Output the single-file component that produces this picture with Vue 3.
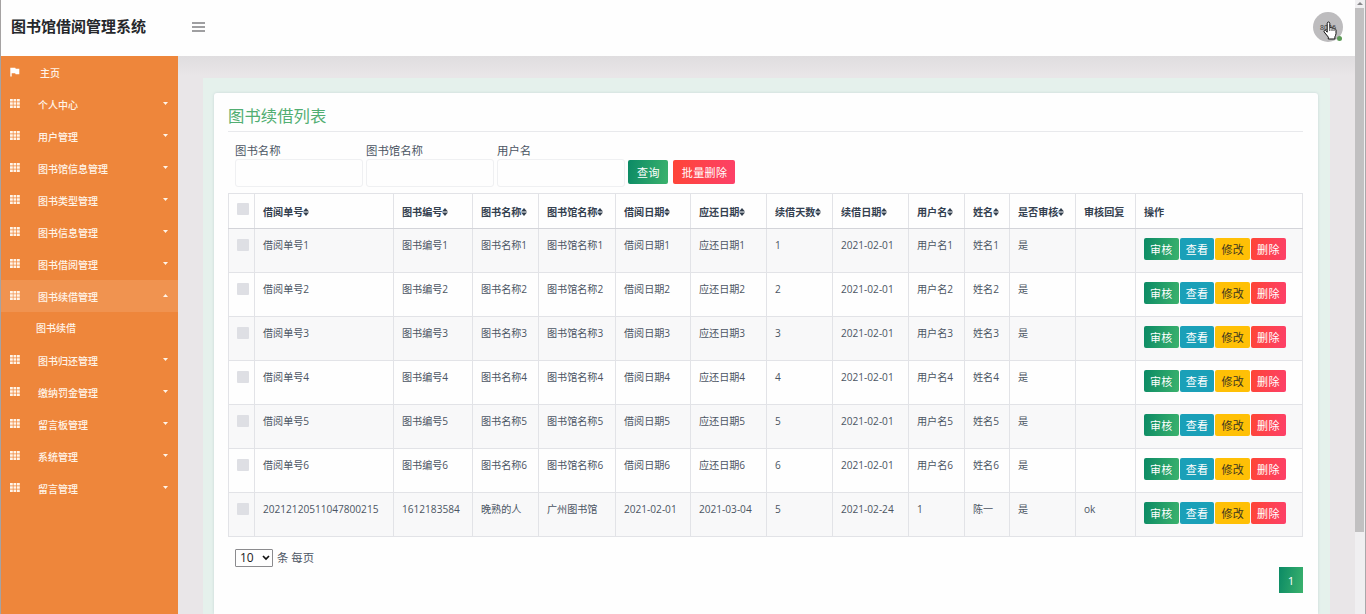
<template>
  <div class="page">
    <header class="navbar">
      <h1 class="brand">图书馆借阅管理系统</h1>
      <button class="menu-toggle" aria-label="menu">
        <svg width="14" height="10" viewBox="0 0 14 10">
          <path d="M0 1h13M0 5h13M0 9h13" stroke="#808083" stroke-width="1.3" />
        </svg>
      </button>
      <div class="avatar">
        <span class="avatar-text">8026</span>
        <span class="avatar-status"></span>
        <svg class="pointer" width="14" height="19" viewBox="0 0 14 19">
          <path
            d="M4.2 11.2V2.4c0-1.9 2.6-1.9 2.6 0v4.5c.5-.8 2-.6 2.2.4.7-.6 1.9-.2 2 .7.8-.5 2 0 2 1.1v3.6c0 1.3-.8 2.1-1.1 3.1V18H5.3v-1.9L1.2 11c-.9-1.4.8-2.5 1.9-1.2z"
            fill="#fff"
            stroke="#111"
            stroke-width="1"
            stroke-linejoin="round"
          />
          <path d="M6.8 7v3M9 7.5V10M11 8.2V10" stroke="#111" stroke-width=".8" />
        </svg>
      </div>
    </header>

    <div class="body">
      <nav class="sidebar">
        <div class="menu-item menu-home">
          <svg class="menu-icon" width="10" height="10" viewBox="0 0 10 10">
            <path d="M.3.8h5l.4 1H9.300v5.400H5.600l-.4-1H1.700V9.500H.3z" fill="#fff" />
          </svg>
          <span class="menu-label">主页</span>
        </div>
        <template v-for="item in menus" :key="item.name">
          <div class="menu-item" :class="{ open: item.children }">
            <svg class="menu-icon" width="10" height="9" viewBox="0 0 10 9">
              <path
                d="M0 0h2.800v2.500H0zM3.500 0h2.800v2.500H3.500zM7 0h2.800v2.500H7zM0 3.200h2.800v2.500H0zM3.500 3.200h2.800v2.500H3.500zM7 3.200h2.800v2.500H7zM0 6.400h2.800v2.500H0zM3.500 6.400h2.800v2.500H3.500zM7 6.400h2.800v2.500H7z"
                fill="#fff4e8"
              />
            </svg>
            <span class="menu-label">{{ item.name }}</span>
            <svg class="caret" width="5" height="3" viewBox="0 0 5 3">
              <path :d="item.children ? 'M0 3h5L2.500 0z' : 'M0 0h5L2.500 3z'" fill="#fff4e8" />
            </svg>
          </div>
          <div v-for="child in item.children" :key="child" class="submenu-item">{{ child }}</div>
        </template>
      </nav>

      <main class="content">
        <div class="panel">
          <section class="card">
            <h2 class="card-title">图书续借列表</h2>

            <form class="search" @submit.prevent>
              <label v-for="field in searchFields" :key="field" class="search-field">
                <span>{{ field }}</span>
                <input type="text" />
              </label>
              <button class="btn btn-success">查询</button>
              <button type="button" class="btn btn-danger">批量删除</button>
            </form>

            <table class="table">
              <thead>
                <tr>
                  <th><i class="check"></i></th>
                  <th v-for="col in columns" :key="col.name">
                    {{ col.name }}<svg v-if="col.sort" class="sort" width="6" height="8" viewBox="0 0 6 8">
                      <path d="M0 3.400L3 0l3 3.400zM0 4.600h6L3 8z" fill="#34404f" />
                    </svg>
                  </th>
                </tr>
              </thead>
              <tbody>
                <tr v-for="(row, i) in rows" :key="i">
                  <td><i class="check"></i></td>
                  <td v-for="(cell, j) in row" :key="j">{{ cell }}</td>
                  <td>
                    <div class="actions">
                      <button class="btn-sm btn-success">审核</button>
                      <button class="btn-sm btn-info">查看</button>
                      <button class="btn-sm btn-warning">修改</button>
                      <button class="btn-sm btn-danger">删除</button>
                    </div>
                  </td>
                </tr>
              </tbody>
            </table>

            <div class="page-size">
              <div class="select">
                10
                <svg width="8" height="6" viewBox="0 0 8 6">
                  <path d="M1 1l3 3 3-3" fill="none" stroke="#111" stroke-width="1.700" />
                </svg>
              </div>
              <span>条 每页</span>
            </div>
            <div class="pagination">
              <button class="page-btn btn-success">1</button>
            </div>
          </section>
        </div>
      </main>
    </div>

    <div class="scrollbar">
      <i class="scroll-up"></i>
      <div class="scroll-thumb"></div>
    </div>
  </div>
</template>

<script setup>
import { ref } from 'vue'

const menus = ref([
  { name: '个人中心' },
  { name: '用户管理' },
  { name: '图书馆信息管理' },
  { name: '图书类型管理' },
  { name: '图书信息管理' },
  { name: '图书借阅管理' },
  { name: '图书续借管理', children: ['图书续借'] },
  { name: '图书归还管理' },
  { name: '缴纳罚金管理' },
  { name: '留言板管理' },
  { name: '系统管理' },
  { name: '留言管理' }
])

const searchFields = ['图书名称', '图书馆名称', '用户名']

const columns = [
  { name: '借阅单号', sort: true },
  { name: '图书编号', sort: true },
  { name: '图书名称', sort: true },
  { name: '图书馆名称', sort: true },
  { name: '借阅日期', sort: true },
  { name: '应还日期', sort: true },
  { name: '续借天数', sort: true },
  { name: '续借日期', sort: true },
  { name: '用户名', sort: true },
  { name: '姓名', sort: true },
  { name: '是否审核', sort: true },
  { name: '审核回复' },
  { name: '操作' }
]

const rows = ref([1, 2, 3, 4, 5, 6].map(n => [
  '借阅单号' + n,
  '图书编号' + n,
  '图书名称' + n,
  '图书馆名称' + n,
  '借阅日期' + n,
  '应还日期' + n,
  n,
  '2021-02-01',
  '用户名' + n,
  '姓名' + n,
  '是',
  ''
]))

rows.value.push([
  '20212120511047800215', '1612183584', '晚熟的人', '广州图书馆', '2021-02-01',
  '2021-03-04', '5', '2021-02-24', '1', '陈一', '是', 'ok'
])
</script>

<style>
body {
  margin: 0;
  overflow: hidden;
}
</style>

<style scoped>
* {
  box-sizing: border-box;
}

.page {
  position: relative;
  width: 1366px;
  height: 614px;
  overflow: hidden;
  padding-right: 11px;
  background: #e9e6e8;
  border-left: 1px solid #a5a2a2;
  font-family: "Open Sans", "Noto Sans CJK SC", sans-serif;
  color: #4b5563;
}

button {
  border: 0;
  padding: 0;
  font-family: inherit;
}

.navbar {
  display: flex;
  align-items: center;
  height: 56px;
  padding: 0 12px 2px 10px;
  background: #fefefe;
}

.brand {
  width: 181px;
  margin: 0 0 2px;
  font-size: 15px;
  font-weight: 700;
  line-height: 20px;
  color: #25272b;
}

.menu-toggle {
  display: flex;
  background: none;
}

.avatar {
  position: relative;
  display: flex;
  align-items: center;
  justify-content: center;
  width: 30px;
  height: 30px;
  margin-left: auto;
  border-radius: 50%;
  background: #bdbcbe;
}

.avatar-text {
  font-size: 7px;
  color: #333;
}

.avatar-status {
  position: absolute;
  right: 1px;
  bottom: 1px;
  width: 5px;
  height: 5px;
  border-radius: 50%;
  background: #5b9a55;
}

.pointer {
  position: absolute;
  left: 10px;
  top: 9px;
}

.body {
  display: flex;
  height: 558px;
}

.sidebar {
  width: 177px;
  flex: none;
  background: #ee863b;
  color: #fff4e8;
  font-size: 10px;
}

.menu-item {
  display: flex;
  align-items: center;
  height: 32px;
  padding: 0 10px 0 9px;
}

.menu-item.open {
  background: #f09350;
}

.menu-icon {
  margin-bottom: 1px;
}

.menu-label {
  margin-left: 18px;
  font-weight: 500;
}

.menu-home .menu-label {
  margin-left: 20px;
}

.caret {
  margin: 0 0 1px auto;
}

.submenu-item {
  height: 32px;
  padding-left: 35px;
  line-height: 32px;
  font-weight: 500;
}

.content {
  flex: 1;
  padding: 22px 25px 0;
  background: linear-gradient(#dfdddf, #e9e6e8 20px);
}

.panel {
  height: 536px;
  padding: 15px 12px 0 11px;
  background: #e5f1ec;
}

.card {
  height: 521px;
  padding: 12px 15px 0 14px;
  border-radius: 3px 3px 0 0;
  background: #fefefe;
  box-shadow: 0 0 3px rgba(90, 110, 140, 0.2);
}

.card-title {
  height: 27px;
  margin: 0;
  border-bottom: 1px solid #e8e9ec;
  font-size: 16.4px;
  font-weight: 400;
  line-height: 22px;
  color: #52ae72;
}

.search {
  display: flex;
  align-items: flex-end;
  height: 55px;
  padding: 0 7px;
}

.search-field {
  display: flex;
  flex-direction: column;
  width: 128px;
  margin-right: 3px;
  font-size: 11.4px;
  line-height: 17px;
}

.search-field input {
  width: 128px;
  height: 28px;
  border: 1px solid #eff0f2;
  border-radius: 3px;
  background: #fefefe;
}

.btn {
  height: 24px;
  margin: 0 5px 3px 0;
  padding: 1px 8px 0 9px;
  border-radius: 2px;
  font-size: 11px;
  line-height: 23px;
  letter-spacing: 0.4px;
}

.btn-success {
  background: linear-gradient(100deg, #0b8a65, #3bb26d);
  color: #fff;
}

.btn-danger {
  background: linear-gradient(100deg, #fe4536, #fd4069);
  color: #fff;
}

.btn-info {
  background: #1aa0b8;
  color: #fff;
}

.btn-warning {
  background: #ffc006;
  color: #3b3420;
}

.table {
  width: 1075px;
  margin-top: 6px;
  table-layout: fixed;
  border-collapse: collapse;
  font-size: 10.1px;
}

.table th,
.table td {
  padding: 0 0 0 8px;
  border: 1px solid #e2e3e7;
  text-align: left;
  white-space: nowrap;
}

.table th {
  height: 35px;
  border-bottom-color: #d3d4d9;
  font-weight: 600;
  color: #34404f;
}

.table td {
  height: 44px;
  padding-top: 9px;
  line-height: 15px;
  vertical-align: top;
}

.table tbody tr:nth-child(odd) {
  background: #f8f8f9;
}

.table th:nth-child(1) { width: 26px; }
.table th:nth-child(2) { width: 139px; }
.table th:nth-child(3) { width: 79px; }
.table th:nth-child(4) { width: 66px; }
.table th:nth-child(5) { width: 77px; }
.table th:nth-child(6) { width: 75px; }
.table th:nth-child(7) { width: 76px; }
.table th:nth-child(8) { width: 66px; }
.table th:nth-child(9) { width: 76px; }
.table th:nth-child(10) { width: 56px; }
.table th:nth-child(11) { width: 45px; }
.table th:nth-child(12) { width: 66px; }
.table th:nth-child(13) { width: 60px; }

.sort {
  vertical-align: -0.5px;
}

.check {
  display: block;
  width: 12px;
  height: 12px;
  border-radius: 1px;
  background: #dedfe4;
}

.table th .check {
  margin-top: -5px;
}

.table td .check {
  margin-top: 1px;
}

.actions {
  display: flex;
  gap: 1px;
}

.btn-sm {
  width: 34.7px;
  height: 22px;
  padding-top: 1px;
  border-radius: 2px;
  font-size: 11px;
  line-height: 21px;
  letter-spacing: 0.3px;
}

.page-size {
  display: flex;
  align-items: center;
  gap: 4px;
  margin: 12px 0 0 7px;
  font-size: 11.4px;
  line-height: 18px;
}

.select {
  display: flex;
  align-items: center;
  justify-content: space-between;
  width: 38px;
  height: 18px;
  padding: 0 2px 0 4px;
  border: 1px solid #8b8b8e;
  border-radius: 1px;
  font-size: 12px;
  color: #222;
}

.pagination {
  display: flex;
  justify-content: flex-end;
}

.page-btn {
  width: 24px;
  height: 26px;
  font-size: 11.5px;
}

.scrollbar {
  position: absolute;
  top: 0;
  right: 0;
  width: 11px;
  height: 614px;
  border-right: 1px solid #aaa8aa;
  background: #f0eff1;
}

.scroll-up {
  display: block;
  margin: 2px 0 3px 2px;
  width: 0;
  border: 3px solid transparent;
  border-top: 0;
  border-bottom-color: #88878a;
}

.scroll-thumb {
  width: 9px;
  height: 524px;
  background: #c1c0c1;
}
</style>
